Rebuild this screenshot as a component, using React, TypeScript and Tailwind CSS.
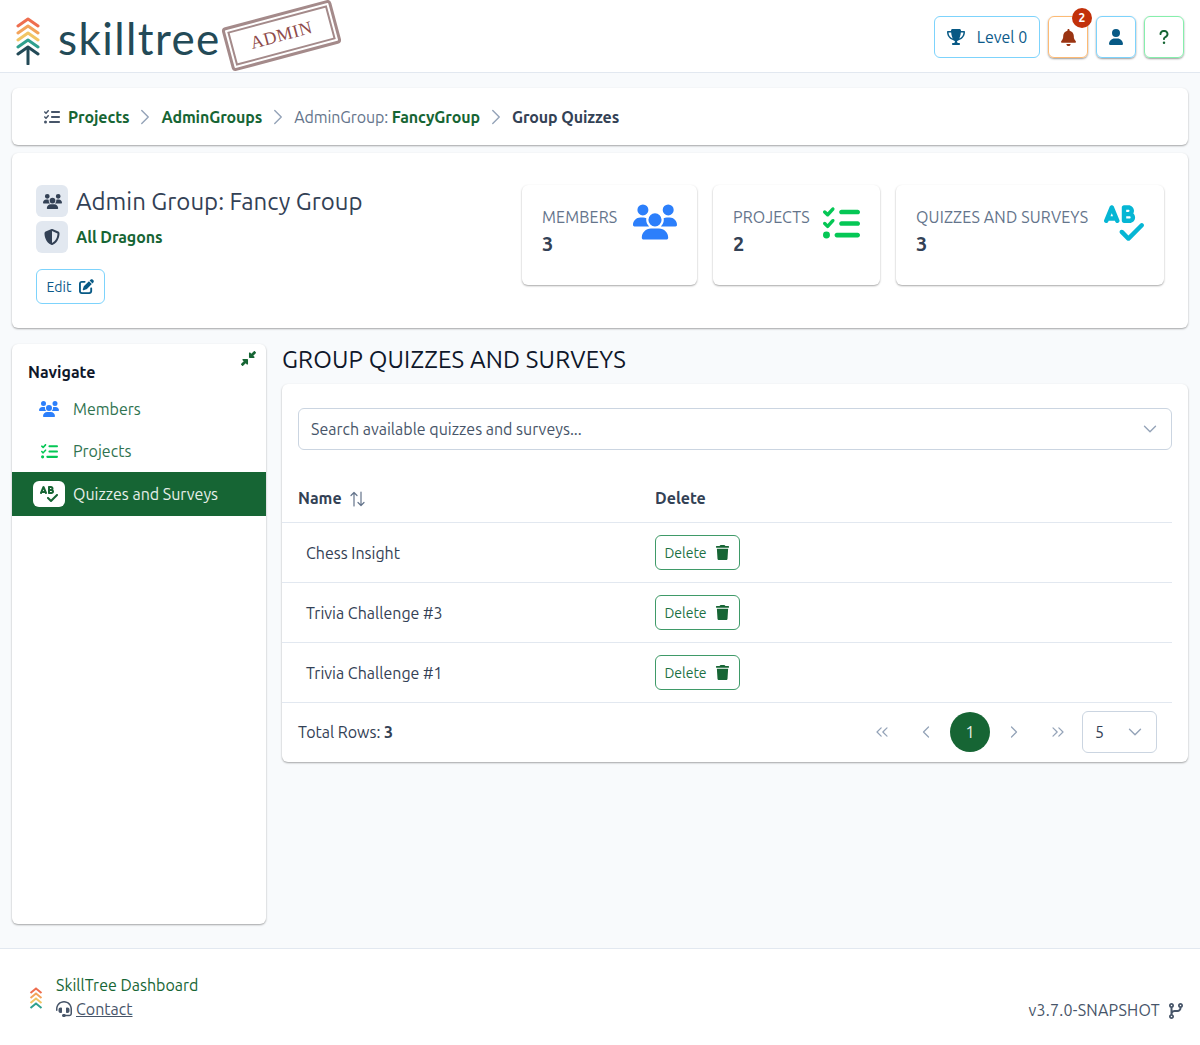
import React from "react";
import { FaUsers, FaListCheck, FaTrophy, FaBell, FaUser, FaQuestion, FaShieldHalved, FaPenToSquare, FaTrash, FaDownLeftAndUpRightToCenter, FaSpellCheck, FaCodeBranch, FaHeadset } from "react-icons/fa6";
import { ChevronRight, ChevronDown, ChevronsLeft, ChevronLeft, ChevronsRight } from "lucide-react";

function Chev({ y, c, w = 3 }: { y: number; c: string; w?: number }) {
  return <path d={`M2 ${y + 7} L12 ${y} L22 ${y + 7}`} fill="none" stroke={c} strokeWidth={w} strokeLinecap="round" strokeLinejoin="round" />;
}

function Logo() {
  return (
    <svg width="24" height="48" viewBox="0 0 24 48" className="shrink-0 mt-[8px] ml-[1px]">
      <Chev y={2} c="#ee6e4f" />
      <Chev y={9} c="#f3a35a" />
      <Chev y={16} c="#f1c564" />
      <Chev y={23} c="#2fa08e" />
      <Chev y={30} c="#234a57" />
      <path d="M12 31 V47" stroke="#234a57" strokeWidth={3} strokeLinecap="round" />
    </svg>
  );
}

function StatCard({ label, value, width, icon }: { label: string; value: string; width: string; icon: React.ReactNode }) {
  return (
    <div className={`${width} h-[100px] bg-white rounded-md shadow-[0_1px_2px_rgba(0,0,0,0.35)] pl-5 pr-5 pt-[20px] flex justify-between`}>
      <div>
        <div className="text-[16px] leading-[24px] text-[#64748b] tracking-[0.15px]">{label}</div>
        <div className="text-[20px] leading-[30px] font-bold text-[#334155]">{value}</div>
      </div>
      {icon}
    </div>
  );
}

function Row({ name }: { name: string }) {
  return (
    <div className="h-[60px] flex items-center border-b border-[#e2e8f0]">
      <div className="w-[373px] pl-[24px] text-[#334155]">{name}</div>
      <button className="h-[35px] w-[85px] flex items-center justify-center gap-[9px] rounded-md border border-[#3f9a68] text-[14px]">
        <span className="text-[#1b7043] mt-[1px]">Delete</span>
        <FaTrash className="text-[#166534] text-[15px] -ml-[1px] mr-[1px]" />
      </button>
    </div>
  );
}

function Crumb() {
  return <ChevronRight className="mx-[3px] text-[#94a3b8]" size={26} strokeWidth={1.3} />;
}

export default function App() {
  return (
    <div className="min-h-[1045px] bg-[#f8fafc] flex flex-col text-[16px] text-[#334155]" style={{ fontFamily: 'Ubuntu, "Noto Sans", sans-serif' }}>
      <header className="h-[73px] bg-white border-b border-[#e2e8f0] flex items-center justify-between pl-[15px] pr-[16px] pt-[2px] shrink-0">
        <div className="flex items-center relative">
          <Logo />
          <span className="ml-[18px] mt-[1px] text-[44px] leading-none text-[#234a57] tracking-[1.4px]" style={{ fontFamily: 'Lato, sans-serif' }}>skilltree</span>
          <div className="absolute left-[210px] top-[4px] w-[113px] h-[45px] -rotate-[15deg] border-[3px] border-[#a48a8a] rounded-[4px] p-[2px] bg-white">
            <div className="w-full h-full border-2 border-[#a48a8a] flex items-center justify-center text-[#8e4a4a] text-[18px] tracking-[0.5px]" style={{ fontFamily: '"Liberation Serif", serif' }}>ADMIN</div>
          </div>
        </div>
        <div className="flex items-center gap-2">
          <button className="h-[42px] w-[106px] flex items-center justify-center gap-[12px] rounded-md border border-[#7dd3fc] text-[#0c5a8a] text-[16px]">
            <FaTrophy className="text-[18px] text-[#075985]" /> Level 0
          </button>
          <button className="relative h-[42px] w-[40px] flex items-center justify-center rounded-md border border-[#fdba74] shadow-[0_1px_2px_rgba(0,0,0,0.4)] text-[#9a3412]">
            <FaBell className="text-[17px]" />
            <span className="absolute -top-[9px] right-[-5px] w-5 h-5 rounded-full bg-[#c2310a] text-white text-[12px] font-semibold flex items-center justify-center">2</span>
          </button>
          <button className="h-[42px] w-[40px] flex items-center justify-center rounded-md border border-[#7dd3fc] shadow-[0_1px_2px_rgba(0,0,0,0.4)] text-[#075985]">
            <FaUser className="text-[16px]" />
          </button>
          <button className="h-[42px] w-[40px] flex items-center justify-center rounded-md border border-[#86efac] shadow-[0_1px_2px_rgba(0,0,0,0.4)] text-[#166534]">
            <FaQuestion className="text-[16px]" />
          </button>
        </div>
      </header>

      <div className="flex-1 px-3 pt-[15px]">
        <nav className="h-[57px] bg-white rounded-md shadow-[0_1px_2px_rgba(0,0,0,0.35)] flex items-center pl-[32px] text-[16px] tracking-[-0.1px]">
          <FaListCheck className="text-[#475569] text-[16px] mr-[8px]" />
          <span className="font-semibold text-[#166534]">Projects</span>
          <Crumb />
          <span className="font-semibold text-[#166534]">AdminGroups</span>
          <Crumb />
          <span className="text-[#64748b]">AdminGroup:&nbsp;</span>
          <span className="font-semibold text-[#166534]">FancyGroup</span>
          <Crumb />
          <span className="font-semibold text-[#334155]">Group Quizzes</span>
        </nav>

        <section className="mt-2 h-[175px] bg-white rounded-md shadow-[0_1px_2px_rgba(0,0,0,0.35)] flex justify-between pl-6 pr-6 pt-8">
          <div>
            <div className="flex items-center gap-2 h-8">
              <span className="w-8 h-8 rounded-md bg-[#e2e8f0] flex items-center justify-center"><FaUsers className="text-[19px] text-[#334155]" /></span>
              <span className="text-[24px] leading-8 text-[#334155] mt-[2px]">Admin Group: Fancy Group</span>
            </div>
            <div className="flex items-center gap-2 h-8 mt-[4px]">
              <span className="w-8 h-8 rounded-md bg-[#e2e8f0] flex items-center justify-center"><FaShieldHalved className="text-[16px] text-[#334155]" /></span>
              <span className="font-semibold text-[#166534] tracking-[-0.1px]">All Dragons</span>
            </div>
            <button className="mt-[16px] h-[35px] w-[69px] flex items-center justify-center gap-[8px] rounded-md border border-[#7dd3fc] text-[#0c5a8a] text-[14px]">
              <span className="mt-[1px]">Edit</span> <FaPenToSquare className="text-[15px] text-[#075985]" />
            </button>
          </div>
          <div className="flex gap-4">
            <StatCard label="MEMBERS" value="3" width="w-[175px]" icon={<FaUsers className="text-[#2c7ffb] text-[44px] -mt-[5px]" />} />
            <StatCard label="PROJECTS" value="2" width="w-[167px]" icon={<FaListCheck className="text-[#05c755] text-[37px]" />} />
            <StatCard label="QUIZZES AND SURVEYS" value="3" width="w-[268px]" icon={
              <FaSpellCheck className="text-[#06b6d4] text-[40px] -mt-[2px]" />
            } />
          </div>
        </section>

        <div className="mt-4 flex gap-4">
          <aside className="relative w-[254px] h-[580px] shrink-0 bg-white rounded-md shadow-[0_1px_2px_rgba(0,0,0,0.35)] pt-[16px]">
            <FaDownLeftAndUpRightToCenter className="absolute top-[7px] right-[10px] text-[#166534] text-[15px]" />
            <div className="pl-4 font-semibold text-[#0f172a] leading-6">Navigate</div>
            <div className="mt-[4px]">
              <div className="h-[42px] flex items-center">
                <span className="w-[61px] flex pl-[27px]"><FaUsers className="text-[#2c7ffb] text-[20px]" /></span>
                <span className="text-[#2f7350]">Members</span>
              </div>
              <div className="h-[42px] flex items-center">
                <span className="w-[61px] flex pl-[29px]"><FaListCheck className="text-[#05c755] text-[17px]" /></span>
                <span className="text-[#2f7350]">Projects</span>
              </div>
              <div className="h-[44px] flex items-center bg-[#166534]">
                <span className="ml-[21px] w-8 h-[26px] rounded-md bg-white flex items-center justify-center"><FaSpellCheck className="text-[#166534] text-[18px]" /></span>
                <span className="ml-2 text-[#e6efe9]">Quizzes and Surveys</span>
              </div>
            </div>
          </aside>

          <main className="flex-1 min-w-0">
            <h1 className="text-[24px] leading-[32px] text-[#0f172a] tracking-[0.17px]">GROUP QUIZZES AND SURVEYS</h1>
            <div className="mt-[8px] h-[378px] bg-white rounded-md shadow-[0_1px_2px_rgba(0,0,0,0.35)]">
              <div className="pt-[24px] px-4">
                <div className="h-[42px] rounded-md border border-[#cbd5e1] flex items-center justify-between pl-3 pr-[10px] text-[#475569]">
                  <span>Search available quizzes and surveys...</span>
                  <ChevronDown size={22} strokeWidth={1.5} className="text-[#94a3b8]" />
                </div>
              </div>
              <div className="pr-4">
                <div className="h-[73px] flex items-end pb-[12px] border-b border-[#e2e8f0] font-semibold text-[#334155]">
                  <div className="w-[373px] pl-4 flex items-center gap-2">
                    Name
                    <svg width="15" height="16" viewBox="0 0 15 16" fill="none" stroke="#64748b" strokeWidth="1.2" strokeLinecap="round" strokeLinejoin="round" className="mt-[2px]">
                      <path d="M4 15 V1.5 M1 4.5 L4 1.5 L7 4.5" />
                      <path d="M11 1 V14.5 M8 11.5 L11 14.5 L14 11.5" />
                    </svg>
                  </div>
                  <div>Delete</div>
                </div>
                <Row name="Chess Insight" />
                <Row name="Trivia Challenge #3" />
                <Row name="Trivia Challenge #1" />
                <div className="h-[58px] flex items-center justify-between pl-4 pr-[15px]">
                  <div>Total Rows: <span className="font-bold">3</span></div>
                  <div className="flex items-center text-[#94a3b8]">
                    <span className="w-10 h-10 flex items-center justify-center"><ChevronsLeft size={20} strokeWidth={1.5} /></span>
                    <span className="ml-1 w-10 h-10 flex items-center justify-center"><ChevronLeft size={20} strokeWidth={1.5} /></span>
                    <span className="ml-1 w-10 h-10 rounded-full bg-[#166534] text-[#e6efe9] flex items-center justify-center">1</span>
                    <span className="ml-1 w-10 h-10 flex items-center justify-center"><ChevronRight size={20} strokeWidth={1.5} /></span>
                    <span className="ml-1 w-10 h-10 flex items-center justify-center"><ChevronsRight size={20} strokeWidth={1.5} /></span>
                    <span className="ml-1 w-[75px] h-[42px] rounded-md border border-[#cbd5e1] flex items-center justify-between pl-3 pr-[10px] text-[#334155]">
                      5 <ChevronDown size={22} strokeWidth={1.5} className="text-[#94a3b8]" />
                    </span>
                  </div>
                </div>
              </div>
            </div>
          </main>
        </div>
      </div>

      <footer className="h-[97px] mt-[24px] shrink-0 bg-white border-t border-[#e2e8f0] flex items-center justify-between pl-[29px] pr-[16px]">
        <div className="flex items-center gap-[13px]">
          <svg width="14" height="26" viewBox="0 0 14 26" className="mt-[6px]">
            <path d="M1.5 6 L7 1.5 L12.5 6" fill="none" stroke="#ee6e4f" strokeWidth="2" />
            <path d="M1.5 11 L7 6.5 L12.5 11" fill="none" stroke="#f3a35a" strokeWidth="2" />
            <path d="M1.5 16 L7 11.5 L12.5 16" fill="none" stroke="#f1c564" strokeWidth="2" />
            <path d="M1.5 21 L7 16.5 L12.5 21" fill="none" stroke="#2fa08e" strokeWidth="2" />
          </svg>
          <div className="leading-6">
            <div className="text-[#166534]">SkillTree Dashboard</div>
            <div className="flex items-center gap-[4px] text-[#475569]"><FaHeadset className="text-[16px]" /><span className="underline">Contact</span></div>
          </div>
        </div>
        <div className="flex items-center gap-[8px] text-[#475569] mt-[25px] tracking-[0.25px]">
          v3.7.0-SNAPSHOT <FaCodeBranch className="text-[16px] mt-[2px]" />
        </div>
      </footer>
    </div>
  );
}
